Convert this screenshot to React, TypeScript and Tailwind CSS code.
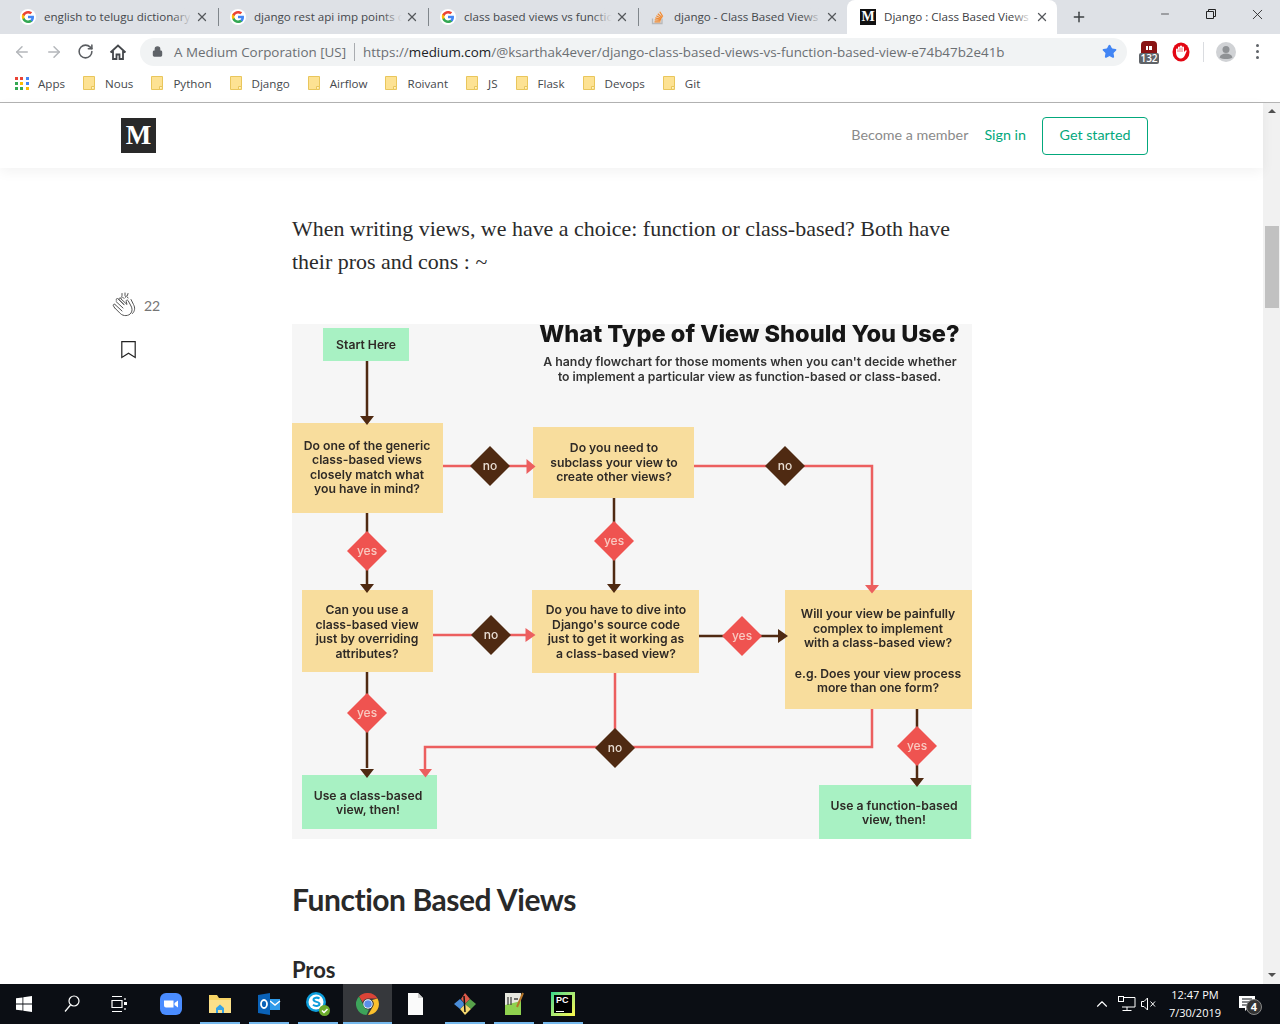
import { ArrowLeft, ArrowRight, RotateCw, Lock, Star, X, Plus, Minus, ChevronUp } from "lucide-react";

const GoogleIcon = () => (
  <svg viewBox="0 0 24 24" className="size-[16px] shrink-0">
    <circle cx="12" cy="12" r="12" fill="#fff" />
    <path fill="#4285F4" d="M21 12.2c0-.6-.1-1.3-.2-1.900H12v3.600h5c-.2 1.200-.9 2.200-1.900 2.800v2.400h3.100c1.800-1.700 2.800-4.100 2.800-6.900z" />
    <path fill="#34A853" d="M12 21c2.500 0 4.600-.8 6.200-2.300l-3.100-2.400c-.8.6-1.900.9-3.100.9-2.400 0-4.400-1.600-5.100-3.800H3.700v2.500C5.300 19 8.400 21 12 21z" />
    <path fill="#FBBC05" d="M6.900 13.400c-.4-1.200-.4-2.500 0-3.700V7.200H3.700c-1.300 2.500-1.300 5.600 0 8.100z" />
    <path fill="#EA4335" d="M12 6.600c1.400 0 2.600.5 3.500 1.400l2.700-2.700C16.600 3.800 14.400 3 12 3 8.400 3 5.300 5 3.700 8.100l3.200 2.500C7.600 8.300 9.600 6.600 12 6.600z" />
  </svg>
);

const StackIcon = () => (
  <svg viewBox="0 0 16 16" className="size-[16px] shrink-0" fill="none">
    <path d="M2.500 9.500v5h9.500v-5" stroke="#b7b8ba" strokeWidth="1.300" />
    <path d="M4.500 12.800h6M4.700 10.800l6 .6M5.300 8.800l5.800 1.500M6.300 6.700l5.200 2.900M7.800 4.700l4.400 4M9.800 2.800l3 4.800" stroke="#f28a30" strokeWidth="1.200" />
  </svg>
);

const MediumFavicon = () => (
  <div className="flex size-[16px] shrink-0 items-center justify-center bg-[#111] font-['Liberation_Serif'] text-[14px] leading-none font-bold text-white">
    M
  </div>
);

const tabs = [
  { title: "english to telugu dictionary", icon: <GoogleIcon /> },
  { title: "django rest api imp points c", icon: <GoogleIcon /> },
  { title: "class based views vs functio", icon: <GoogleIcon /> },
  { title: "django - Class Based Views", icon: <StackIcon /> },
  { title: "Django : Class Based Views", icon: <MediumFavicon />, active: true },
];

const bookmarks = ["Nous", "Python", "Django", "Airflow", "Roivant", "JS", "Flask", "Devops", "Git"];

const FolderIcon = () => (
  <svg viewBox="0 0 12 14" className="h-[14px] w-[12px] shrink-0">
    <path d="M.5.500h11v13H.5z" fill="#fde293" stroke="#e9c65c" strokeWidth="1" />
    <path d="M8.500 13.500v-3h3" fill="#fff3c4" stroke="#e9c65c" strokeWidth="1" />
  </svg>
);

const AppsIcon = () => (
  <div className="grid size-[14px] grid-cols-3 gap-[2px]">
    {["#ea4335", "#ea4335", "#4285f4", "#34a853", "#fbbc05", "#4285f4", "#34a853", "#34a853", "#fbbc05"].map((c, i) => (
      <div key={i} className="size-[3px]" style={{ backgroundColor: c }} />
    ))}
  </div>
);

const TabStrip = () => (
  <div className="flex h-[34px] shrink-0 bg-[#dee1e6] pl-[7px] font-['Open_Sans'] text-[11.6px]">
    {tabs.map((t, i) => (
      <div
        key={i}
        className={`relative flex h-full w-[210px] items-center pr-[8px] pl-[13px] ${t.active ? "rounded-t-lg bg-white text-[#3c4043]" : "text-[#45484c]"}`}
      >
        {t.icon}
        <div className="relative ml-[8px] min-w-0 flex-1 overflow-hidden whitespace-nowrap">
          {t.title}
          <div className={`absolute inset-y-0 right-0 w-[20px] bg-linear-to-r from-transparent ${t.active ? "to-white" : "to-[#dee1e6]"}`} />
        </div>
        <X className="ml-[3px] size-[14px] shrink-0 text-[#55585c]" strokeWidth={2.2} />
        {i < 3 && <div className="absolute top-[8px] right-[-2px] h-[18px] w-px bg-[#80868b]" />}
      </div>
    ))}
    <div className="ml-[14px] flex items-center">
      <Plus className="size-[16px] text-[#3c4043]" strokeWidth={2.2} />
    </div>
    <div className="ml-auto flex items-start text-[#222]">
      <div className="flex h-[28px] w-[46px] items-center justify-center">
        <Minus className="size-[12px]" strokeWidth={1.4} />
      </div>
      <div className="flex h-[28px] w-[46px] items-center justify-center">
        <svg viewBox="0 0 10 10" className="size-[10px]" fill="none" stroke="currentColor" strokeWidth="1">
          <path d="M.5 2.500h7v7h-7zM2.500 2.500v-2h7v7h-2" />
        </svg>
      </div>
      <div className="flex h-[28px] w-[46px] items-center justify-center">
        <X className="size-[17px]" strokeWidth={1.2} />
      </div>
    </div>
  </div>
);

const Toolbar = () => (
  <div className="flex h-[35px] shrink-0 items-center bg-white pr-[12px] pl-[13px]">
    <ArrowLeft className="size-[18px] text-[#b4b7bb]" strokeWidth={2} />
    <ArrowRight className="ml-[14px] size-[18px] text-[#b4b7bb]" strokeWidth={2} />
    <RotateCw className="ml-[14px] size-[17px] text-[#5a5d61]" strokeWidth={2.2} />
    <svg viewBox="0 0 18 18" className="ml-[15px] size-[18px]" fill="none" stroke="#45484c" strokeWidth="1.800">
      <path d="M1.500 9.500 9 2.500l7.500 7M4 8v8h3.500v-4.500h3V16H14V8" strokeLinejoin="miter" />
    </svg>
    <div className="ml-[13px] flex h-[28px] w-[987px] items-center rounded-full bg-[#f1f3f4] pr-[10px] pl-[12px] font-['Open_Sans'] text-[13.4px] text-[#6b6f73]">
      <Lock className="size-[11px] fill-[#5f6368] text-[#5f6368]" strokeWidth={2.5} />
      <span className="ml-[11px] pt-px whitespace-nowrap">A Medium Corporation [US]</span>
      <div className="mx-[8px] h-[18px] w-px bg-[#a9acb0]" />
      <span className="pt-px whitespace-nowrap">
        https://<span className="text-[#202124]">medium.com</span>/@ksarthak4ever/django-class-based-views-vs-function-based-view-e74b47b2e41b
      </span>
      <Star className="ml-auto size-[15px] fill-[#4285f4] text-[#4285f4]" />
    </div>
    <div className="relative ml-[12px] h-[24px] w-[20px]">
      <div className="absolute top-[1px] left-[2px] flex h-[12px] w-[16px] items-center justify-center gap-[1px] rounded-t-sm bg-[#8a1414]">
        <div className="mt-[3px] h-[4px] w-[2px] bg-white" />
        <div className="mt-[3px] h-[4px] w-[3px] bg-white" />
      </div>
      <div className="absolute bottom-0 left-0 h-[11px] w-[20px] rounded-[2px] bg-[#5f6368] text-center font-['Open_Sans'] text-[10px] leading-[11px] font-semibold text-white">
        132
      </div>
    </div>
    <svg viewBox="0 0 18 20" className="ml-[13px] h-[20px] w-[18px]">
      <ellipse cx="9" cy="10" rx="8.500" ry="9.500" fill="#e30613" />
      <path d="M4 10V7.500a1 1 0 0 1 2 0V5.500a1 1 0 0 1 2 0V4.500a1 1 0 0 1 2 0v1a1 1 0 0 1 2 0V10l1.500-1.500c.8-.5 1.500.3 1 1L12.500 14c-.8 1.300-2 2.500-3.500 2.500C6 16.500 4 14 4 10z" fill="#fff" />
      <path d="M6 7.500V10M8 5.500V10M10 5.500V10" stroke="#e30613" strokeWidth=".6" fill="none" />
    </svg>
    <div className="ml-[13px] h-[20px] w-px bg-[#dadce0]" />
    <svg viewBox="0 0 20 20" className="ml-[12px] size-[20px]">
      <circle cx="10" cy="10" r="10" fill="#d0d2d5" />
      <circle cx="10" cy="7.500" r="3.500" fill="#8f9295" />
      <path d="M3.500 15.500c1-3 3.500-4 6.500-4s5.500 1 6.500 4c-3.500 2-9.500 2-13 0z" fill="#8f9295" />
    </svg>
    <div className="ml-[20px] flex flex-col gap-[3px]">
      <div className="size-[3px] rounded-full bg-[#5f6368]" />
      <div className="size-[3px] rounded-full bg-[#5f6368]" />
      <div className="size-[3px] rounded-full bg-[#5f6368]" />
    </div>
  </div>
);

const BookmarksBar = () => (
  <div className="flex h-[34px] shrink-0 items-center border-b border-[#b4b4b4] bg-white pb-[4px] pl-[15px] font-['Open_Sans'] text-[11.6px] text-[#45484c]">
    <AppsIcon />
    <span className="mr-[18px] ml-[9px]">Apps</span>
    {bookmarks.map((b) => (
      <div key={b} className="mr-[18px] flex items-center gap-[10px]">
        <FolderIcon />
        <span>{b}</span>
      </div>
    ))}
  </div>
);

const PageHeader = () => (
  <div className="z-10 flex h-[65px] shrink-0 items-center justify-between bg-white pr-[115px] pl-[121px] shadow-[0_4px_12px_rgba(0,0,0,0.05)]">
    <div className="flex size-[35px] items-center justify-center bg-[#292929] font-['Liberation_Serif'] text-[27px] leading-none font-bold text-white">
      M
    </div>
    <div className="flex items-center font-['Lato'] text-[14.3px]">
      <span className="pb-px text-[#8a8a8a]">Become a member</span>
      <span className="ml-[16px] pb-px text-[#03a87c]">Sign in</span>
      <div className="ml-[16px] flex h-[38px] w-[106px] items-center justify-center rounded-[4px] border border-[#03a87c] pb-px text-[#03a87c]">
        Get started
      </div>
    </div>
  </div>
);

const ClapIcon = () => (
  <svg viewBox="0 0 26 26" className="size-[26px]" fill="none" stroke="#555" strokeWidth="1" strokeLinejoin="round" strokeLinecap="round">
    <path d="M10 1.500v2M13 1v2.500M16 1.500l-.6 2" />
    <path d="M4 9.500 11 16M3 12.500l7 6.500M2.800 16l5.500 5.500c3 3 8.500 2.700 10.700-.5 1.600-2.500 1.300-5-.5-8l-2.500-4.500c-.7-1-2-.5-1.800.8l.8 3.200L8.500 6.500c-1-1-2.300.2-1.300 1.300l5 5L6 6.800c-1-1-2.400.3-1.500 1.500" />
    <path d="M3 12.500c-1-1-2.500.3-1.500 1.500l1.300 2M12 6.500l-1.500-1.500c-1-1-2.300.2-1.300 1.300M16 6l-1-1.500c-.7-1-2-.3-1.700.8M19 7.500l2.500 5c1.800 3.300 1.500 6.500-1 9" />
  </svg>
);

const boxes = [
  { x: 323, y: 328, w: 86, h: 33, c: "#a8f1c3" },
  { x: 292, y: 423, w: 151, h: 90, c: "#f8dd9d" },
  { x: 533, y: 427, w: 161, h: 71, c: "#f8dd9d" },
  { x: 302, y: 590, w: 131, h: 82, c: "#f8dd9d" },
  { x: 532, y: 590, w: 167, h: 83, c: "#f8dd9d" },
  { x: 785, y: 590, w: 187, h: 119, c: "#f8dd9d" },
  { x: 302, y: 775, w: 135, h: 54, c: "#a8f1c3" },
  { x: 819, y: 785, w: 152, h: 54, c: "#a8f1c3" },
];

const labels = [
  { x: 366, y: 349, t: "Start Here" },
  { x: 367, y: 449.5, t: "Do one of the generic" },
  { x: 367, y: 464, t: "class-based views" },
  { x: 367, y: 478.5, t: "closely match what" },
  { x: 367, y: 493, t: "you have in mind?" },
  { x: 614, y: 452, t: "Do you need to" },
  { x: 614, y: 466.5, t: "subclass your view to" },
  { x: 614, y: 481, t: "create other views?" },
  { x: 367, y: 614, t: "Can you use a" },
  { x: 367, y: 628.5, t: "class-based view" },
  { x: 367, y: 643, t: "just by overriding" },
  { x: 367, y: 657.5, t: "attributes?" },
  { x: 616, y: 614, t: "Do you have to dive into" },
  { x: 616, y: 628.5, t: "Django's source code" },
  { x: 616, y: 643, t: "just to get it working as" },
  { x: 616, y: 657.5, t: "a class-based view?" },
  { x: 878, y: 618, t: "Will your view be painfully" },
  { x: 878, y: 632.5, t: "complex to implement" },
  { x: 878, y: 647, t: "with a class-based view?" },
  { x: 878, y: 677.5, t: "e.g. Does your view process" },
  { x: 878, y: 692, t: "more than one form?" },
  { x: 368, y: 799.5, t: "Use a class-based" },
  { x: 368, y: 814, t: "view, then!" },
  { x: 894, y: 809.5, t: "Use a function-based" },
  { x: 894, y: 824, t: "view, then!" },
];

const diamonds = [
  { x: 490, y: 466, t: "no" },
  { x: 785, y: 466, t: "no" },
  { x: 491, y: 635, t: "no" },
  { x: 615, y: 748, t: "no" },
  { x: 367, y: 551, t: "yes" },
  { x: 614, y: 541, t: "yes" },
  { x: 742, y: 636, t: "yes" },
  { x: 367, y: 713, t: "yes" },
  { x: 917, y: 746, t: "yes" },
];

const brown = "#4f2a12";
const red = "#ec5f5f";

// viewBox keeps the page coordinates read off the picture
const Flowchart = () => (
  <svg viewBox="292 324 680 515" className="block h-[515px] w-[680px] overflow-visible blur-[0.35px]" fontFamily="Inter, sans-serif">
    <rect x="292" y="324" width="680" height="515" fill="#f6f6f6" />
    <g fill="none" strokeWidth="2.500">
      <path stroke={brown} d="M367 361v56M367 513v72M614 498v88M699 636h82M367 672v96M917 709v70" />
      <path stroke={red} d="M443 466h86M694 466h178v120M433 635h96M615 673v75M872 709v38H425v22" />
    </g>
    {boxes.map((b, i) => (
      <rect key={i} x={b.x} y={b.y} width={b.w} height={b.h} fill={b.c} />
    ))}
    <path fill={brown} d="M360 416h14l-7 9zM360 584h14l-7 9zM607 584h14l-7 9zM360 769h14l-7 9zM910 778h14l-7 9zM778 629v14l10-7z" />
    <path fill={red} d="M526.500 459v15l9-7.500zM525.500 628v14l10-7zM865 585h14l-7 8.500zM419 769h13l-6.500 8.500z" />
    {diamonds.map((d, i) => (
      <g key={i}>
        <path d={`M${d.x} ${d.y - 20}l20 20-20 20-20-20z`} fill={d.t === "no" ? "#4f2a12" : "#ef5350"} />
        <text x={d.x} y={d.y + 4} textAnchor="middle" fontSize="12" fontWeight="500" fill={d.t === "no" ? "#e8ddd2" : "#f9c9c0"}>
          {d.t}
        </text>
      </g>
    ))}
    {labels.map((l, i) => (
      <text key={i} x={l.x} y={l.y} textAnchor="middle" fontSize="12.200" fontWeight="600" fill="#2f2a26">
        {l.t}
      </text>
    ))}
    <text x="749.500" y="342" textAnchor="middle" fontSize="23.600" fontWeight="800" fill="#161616">
      What Type of View Should You Use?
    </text>
    <text x="750" y="366" textAnchor="middle" fontSize="12.300" fontWeight="600" fill="#333">
      A handy flowchart for those moments when you can't decide whether
    </text>
    <text x="749.500" y="380.500" textAnchor="middle" fontSize="12.200" fontWeight="600" fill="#333">
      to implement a particular view as function-based or class-based.
    </text>
  </svg>
);

const Article = () => (
  <div className="flex min-h-0 flex-1 overflow-hidden bg-white">
    <div className="w-[292px] shrink-0 pt-[124px] pl-[112px]">
      <div className="flex items-center gap-[6px] font-['Lato'] text-[14px] text-[#757575]">
        <ClapIcon />
        <span>22</span>
      </div>
      <svg viewBox="0 0 15 18" className="mt-[23px] ml-[9px] h-[18px] w-[15px]" fill="none" stroke="#222" strokeWidth="1.200">
        <path d="M.8.700h13.400v15.800l-6.700-4.300-6.700 4.300z" />
      </svg>
    </div>
    <div className="w-[680px] shrink-0 pt-[44px]">
      <p className="font-['Liberation_Serif'] text-[21.95px] leading-[33px] text-[#2b2b2b]">
        When writing views, we have a choice: function or class-based? Both have their pros and cons : ~
      </p>
      <div className="mt-[46px]">
        <Flowchart />
      </div>
      <h2 className="mt-[40px] font-['Lato'] text-[30px] leading-[40px] font-bold tracking-[-0.45px] text-[#292929]">
        Function Based Views
      </h2>
      <h3 className="mt-[37px] font-['Lato'] text-[22px] leading-[28px] font-bold tracking-[-0.1px] text-[#292929]">
        Pros
      </h3>
    </div>
  </div>
);

const Scrollbar = () => (
  <div className="flex w-[17px] shrink-0 flex-col items-center bg-[#f1f1f1]">
    <div className="mt-[6px] size-0 border-x-[4px] border-b-[4px] border-x-transparent border-b-[#505050]" />
    <div className="mt-[113px] h-[82px] w-[14px] bg-[#c1c1c1]" />
    <div className="mt-auto mb-[7px] size-0 border-x-[4px] border-t-[4px] border-x-transparent border-t-[#505050]" />
  </div>
);

const ChromeIcon = () => (
  <svg viewBox="0 0 24 24" className="size-[24px]">
    <path d="M12 1a11 11 0 0 1 9.500 5.500H12a5.500 5.500 0 0 0-5.200 3.700L3 4.500A11 11 0 0 1 12 1z" fill="#db4437" />
    <path d="M21.500 6.500A11 11 0 0 1 12 23l4.500-7.800A5.500 5.500 0 0 0 16 8l5.500-1.500z" fill="#fbc02d" />
    <path d="M3 4.500l4.400 8.500A5.500 5.500 0 0 0 13 17.400L10.500 23A11 11 0 0 1 3 4.500z" fill="#3da35a" />
    <circle cx="12" cy="12" r="4.700" fill="#fff" />
    <circle cx="12" cy="12" r="3.800" fill="#5a8fe8" />
  </svg>
);

const taskItems = [
  {
    cell: "w-[49px]", inner: "w-[40px]", icon: (
      <svg viewBox="0 0 24 24" className="size-[24px]">
        <rect x="1" y="1" width="22" height="22" rx="6" fill="#4a8cff" />
        <path d="M5 8.500h9.500v7H7a2 2 0 0 1-2-2zM15.500 11l3.500-2.500v7L15.500 13z" fill="#fff" />
      </svg>
    ),
  },
  {
    cell: "w-[49px]", inner: "w-[40px]", on: true, icon: (
      <svg viewBox="0 0 24 24" className="size-[24px]">
        <path d="M1 3h8l2 3h12v15H1z" fill="#f6d365" />
        <path d="M1 8h22v13H1z" fill="#fbe08a" />
        <path d="M8 21v-5l4-3.500 4 3.500v5h-2v-3h-4v3z" fill="#35a3e8" />
      </svg>
    ),
  },
  {
    cell: "w-[49px]", inner: "w-[40px]", on: true, icon: (
      <svg viewBox="0 0 24 24" className="size-[24px]">
        <path d="M12 7h11v11H12z" fill="#2f9bea" />
        <path d="M13 9l5 4 5-4" fill="none" stroke="#fff" strokeWidth="1.500" />
        <path d="M1 3l12-2v22L1 21z" fill="#0a62b8" />
        <ellipse cx="7" cy="12" rx="3" ry="4" fill="none" stroke="#fff" strokeWidth="1.800" />
      </svg>
    ),
  },
  {
    cell: "w-[45px]", inner: "w-[40px]", on: true, icon: (
      <svg viewBox="0 0 26 26" className="size-[26px]">
        <circle cx="11" cy="11" r="10" fill="#0d9ddb" />
        <circle cx="11" cy="11" r="7.500" fill="#fff" />
        <path d="M14.500 7.500c-2-1.500-6-1-6 1.300 0 2.700 6 1.500 6 4.200 0 2.300-4.500 2.500-6.500.7" fill="none" stroke="#0d9ddb" strokeWidth="2" />
        <circle cx="19.500" cy="19.500" r="5.500" fill="#6bab2c" />
        <path d="M17 19.500l2 2 3.500-3.500" fill="none" stroke="#fff" strokeWidth="1.500" />
      </svg>
    ),
  },
  { cell: "w-[49px]", inner: "w-[49px] bg-[#36383c]", on: true, icon: <ChromeIcon /> },
  {
    cell: "w-[53px]", inner: "w-[46px]", icon: (
      <svg viewBox="0 0 24 24" className="size-[24px]">
        <path d="M5 1h10l5 5v17H5z" fill="#fafafa" />
        <path d="M15 1v5h5z" fill="#cfcfcf" />
      </svg>
    ),
  },
  {
    cell: "w-[49px]", inner: "w-[40px]", on: true, icon: (
      <svg viewBox="0 0 24 24" className="size-[24px]">
        <path d="M12 1l5 6-5 5-4-5z" fill="#e05a4a" />
        <path d="M17 7l6 5-5 5-6-5z" fill="#58a14a" />
        <path d="M12 12l6 5-6 6-5-6z" fill="#f5d76e" />
        <path d="M7 7l5 5-5 5-6-5z" fill="#4a8cd8" />
        <path d="M11 4l1 16" stroke="#111" strokeWidth="1.500" />
      </svg>
    ),
  },
  {
    cell: "w-[49px]", inner: "w-[40px]", on: true, icon: (
      <svg viewBox="0 0 24 24" className="size-[24px]">
        <path d="M3 1h16v22H3z" fill="#e8e8e0" />
        <path d="M3 13l16-4v14H3z" fill="#8fd14f" />
        <path d="M6 5v8M9 5v8M12 7h4" stroke="#444" strokeWidth="1.300" />
        <path d="M21 1l-6 14" stroke="#b5762a" strokeWidth="2" />
      </svg>
    ),
  },
  {
    cell: "w-[49px]", inner: "w-[40px]", on: true, icon: (
      <div className="flex size-[24px] items-center justify-center bg-linear-to-br from-[#21d789] to-[#fcf84a] p-[3px]">
        <div className="flex size-full flex-col bg-black px-[2px] font-['Liberation_Sans'] text-[9px] leading-[10px] font-bold text-white">
          PC
          <div className="mt-auto mb-[1px] h-px w-[8px] bg-white" />
        </div>
      </div>
    ),
  },
];

const Taskbar = () => (
  <div className="flex h-[40px] shrink-0 items-stretch bg-[#0b0e14] text-white">
    <div className="flex w-[48px] items-center justify-center">
      <svg viewBox="0 0 16 16" className="size-[16px]" fill="#fff">
        <path d="M0 2.300 6.500 1.400v6.200H0zM7.300 1.300 16 0v7.600H7.300zM0 8.400h6.500v6.200L0 13.700zM7.300 8.400H16V16l-8.700-1.200z" />
      </svg>
    </div>
    <div className="flex w-[48px] items-center justify-center">
      <svg viewBox="0 0 16 18" className="h-[18px] w-[16px]" fill="none" stroke="#fff" strokeWidth="1.200">
        <circle cx="10" cy="6" r="5" />
        <path d="M6.500 10 1 16.500" />
      </svg>
    </div>
    <div className="flex w-[48px] items-center justify-center">
      <svg viewBox="0 0 18 16" className="h-[16px] w-[18px]" fill="none" stroke="#fff" strokeWidth="1.200">
        <path d="M1 .5h10M1 15.500h10M1 4.500h10v7H1z" />
        <path d="M14 2v2M14 12v2" />
        <rect x="13" y="6" width="3" height="3" fill="#fff" stroke="none" />
      </svg>
    </div>
    <div className="w-[7px]" />
    {taskItems.map((t, i) => (
      <div key={i} className={`flex ${t.cell}`}>
        <div className={`relative flex items-center justify-center ${t.inner}`}>
          {t.icon}
          {t.on && <div className="absolute inset-x-0 bottom-0 h-[2px] bg-[#76b9ed]" />}
        </div>
      </div>
    ))}
    <div className="ml-auto flex items-center">
      <ChevronUp className="size-[18px] text-white" strokeWidth={1.500} />
      <svg viewBox="0 0 18 16" className="ml-[7px] h-[16px] w-[18px]" fill="none" stroke="#fff" strokeWidth="1">
        <path d="M4 1.500h13v9.500H4M9 11v3.500M4.500 14.500h9" />
        <rect x=".5" y=".5" width="5" height="5" fill="#0b0e14" />
      </svg>
      <svg viewBox="0 0 16 14" className="ml-[5px] h-[14px] w-[16px]" fill="none" stroke="#fff" strokeWidth="1">
        <path d="M.5 4.500h2.500L6.500 1v12L3 9.500H.5zM9.500 4.500l4.500 5M14 4.500l-4.500 5" />
      </svg>
      <div className="ml-[8px] w-[60px] text-center font-['Open_Sans'] text-[11px] leading-[18px]">
        <div>12:47 PM</div>
        <div>7/30/2019</div>
      </div>
      <div className="relative mr-[19px] ml-[14px] h-[22px] w-[22px]">
        <svg viewBox="0 0 18 16" className="mt-[3px] h-[16px] w-[18px]" fill="#fff">
          <path d="M0 0h16v12H9l-3 3v-3H0z" />
          <path d="M3 3h10M3 6h10M3 9h7" stroke="#0b0e14" strokeWidth="1" />
        </svg>
        <div className="absolute top-[6px] left-[7px] flex size-[16px] items-center justify-center rounded-full border border-[#888] bg-[#333] font-['Open_Sans'] text-[11px] font-bold">
          4
        </div>
      </div>
    </div>
  </div>
);

export default function App() {
  return (
    <div className="flex h-screen w-full flex-col overflow-hidden bg-white">
      <TabStrip />
      <Toolbar />
      <BookmarksBar />
      <div className="flex min-h-0 flex-1">
        <div className="flex min-w-0 flex-1 flex-col">
          <PageHeader />
          <Article />
        </div>
        <Scrollbar />
      </div>
      <Taskbar />
    </div>
  );
}
